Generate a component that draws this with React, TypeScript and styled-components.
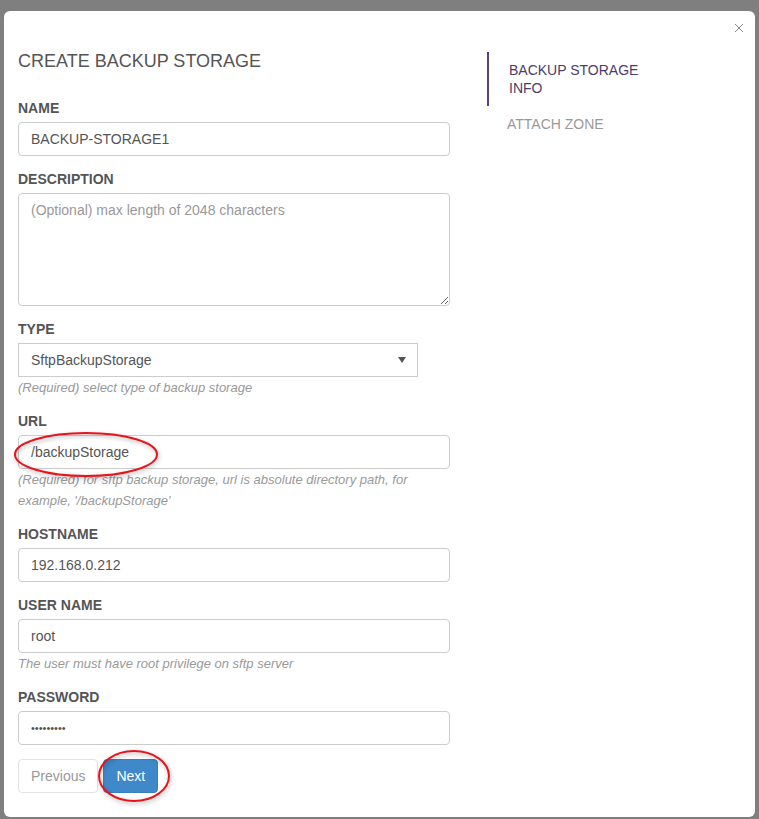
import React from 'react'
import styled, {createGlobalStyle} from 'styled-components'

const GlobalStyle = createGlobalStyle`
	html, body {
		margin: 0;
		padding: 0;
		background: #7f7f7f;
	}
	body {
		font-family: 'Liberation Sans', Arial, sans-serif;
		color: #555;
	}
	* {
		box-sizing: border-box;
	}
`

const Ellipse = ({width, height}: {width: number; height: number}) => (
	<svg width={width} height={height} viewBox={`0 0 ${width} ${height}`}>
		<ellipse cx={width / 2} cy={height / 2} rx={width / 2 - 2} ry={height / 2 - 2} fill="none" stroke="#e8141b" strokeWidth="2" />
	</svg>
)

const App = () => {
	return (
		<>
			<GlobalStyle />
			<Modal>
				<CloseButton aria-label="close">
					<svg width="10" height="10" viewBox="0 0 10 10">
						<path d="M1 1 L9 9 M9 1 L1 9" stroke="#888" strokeWidth="1" />
					</svg>
				</CloseButton>
				<Body>
					<FormColumn>
						<Title>CREATE BACKUP STORAGE</Title>
						<FormGroup>
							<Label>NAME</Label>
							<Input value="BACKUP-STORAGE1" readOnly />
						</FormGroup>
						<FormGroup>
							<Label>DESCRIPTION</Label>
							<TextArea placeholder="(Optional) max length of 2048 characters" readOnly />
						</FormGroup>
						<FormGroup>
							<Label>TYPE</Label>
							<Select>
								<span>SftpBackupStorage</span>
								<svg width="8" height="6" viewBox="0 0 8 6">
									<path d="M0 0 H8 L4 6 Z" fill="#555" />
								</svg>
							</Select>
							<Help>(Required) select type of backup storage</Help>
						</FormGroup>
						<FormGroup>
							<Label>URL</Label>
							<Marked>
								<Input value="/backupStorage" readOnly />
								<Mark $left={-5} $top={-4}>
									<Ellipse width={146} height={47} />
								</Mark>
							</Marked>
							<Help>(Required) for sftp backup storage, url is absolute directory path, for example, '/backupStorage'</Help>
						</FormGroup>
						<FormGroup>
							<Label>HOSTNAME</Label>
							<Input value="192.168.0.212" readOnly />
						</FormGroup>
						<FormGroup>
							<Label>USER NAME</Label>
							<Input value="root" readOnly />
							<Help>The user must have root privilege on sftp server</Help>
						</FormGroup>
						<FormGroup>
							<Label>PASSWORD</Label>
							<Input type="password" value="password1" readOnly $secret />
						</FormGroup>
						<Buttons>
							<Button>Previous</Button>
							<Marked>
								<Button $primary>Next</Button>
								<Mark $left={-6} $top={-10}>
									<Ellipse width={74} height={54} />
								</Mark>
							</Marked>
						</Buttons>
					</FormColumn>
					<Steps>
						<Step $active>BACKUP STORAGE INFO</Step>
						<Step>ATTACH ZONE</Step>
					</Steps>
				</Body>
			</Modal>
		</>
	)
}

const Modal = styled.div`
	position: relative;
	margin: 11px 0 0 4px;
	width: 751px;
	background: #fff;
	border-radius: 6px;
	padding: 40px 14px 24px;
`

const CloseButton = styled.button`
	position: absolute;
	top: 12px;
	right: 11px;
	border: none;
	background: none;
	padding: 0;
	width: 10px;
	height: 10px;
	display: flex;
	cursor: pointer;
`

const Body = styled.div`
	display: flex;
	align-items: flex-start;
`

const FormColumn = styled.div`
	width: 432px;
	display: flex;
	flex-direction: column;
	gap: 13px;
`

const Title = styled.h3`
	margin: 0 0 14px;
	font-size: 18px;
	line-height: 20px;
	font-weight: normal;
	color: #555;
`

const FormGroup = styled.div`
	display: flex;
	flex-direction: column;
`

const Label = styled.label`
	font-size: 14px;
	line-height: 20px;
	font-weight: bold;
	color: #555;
	margin-bottom: 4px;
`

const Input = styled.input<{$secret?: boolean}>`
	width: 100%;
	height: 34px;
	padding: 6px 12px;
	font-family: 'Liberation Sans', Arial, sans-serif;
	font-size: ${(p) => (p.$secret ? '11px' : '14px')};
	color: #555;
	border: 1px solid #ccc;
	border-radius: 4px;
	background: #fff;
	outline: none;
`

const TextArea = styled.textarea`
	width: 100%;
	height: 113px;
	padding: 6px 12px;
	font-family: 'Liberation Sans', Arial, sans-serif;
	font-size: 14px;
	line-height: 20px;
	color: #555;
	border: 1px solid #ccc;
	border-radius: 4px;
	outline: none;
	&::placeholder {
		color: #999;
	}
`

const Select = styled.div`
	width: 400px;
	height: 34px;
	display: flex;
	align-items: center;
	justify-content: space-between;
	padding: 0 11px 0 12px;
	font-size: 14px;
	color: #555;
	border: 1px solid #ccc;
	background: #fff;
`

const Help = styled.p`
	margin: 0;
	font-size: 13px;
	line-height: 21px;
	font-style: italic;
	color: #999;
`

const Marked = styled.div`
	position: relative;
`

const Mark = styled.div<{$left: number; $top: number}>`
	position: absolute;
	left: ${(p) => p.$left}px;
	top: ${(p) => p.$top}px;
	pointer-events: none;
	filter: drop-shadow(1px 2px 2px rgba(0, 0, 0, 0.3));
	svg {
		display: block;
	}
`

const Buttons = styled.div`
	display: flex;
	gap: 5px;
	margin-top: 1px;
`

const Button = styled.button<{$primary?: boolean}>`
	height: 34px;
	padding: 6px 12px;
	font-family: 'Liberation Sans', Arial, sans-serif;
	font-size: 14px;
	border-radius: 4px;
	border: 1px solid ${(p) => (p.$primary ? '#3a7fc0' : '#e3e3e3')};
	background: ${(p) => (p.$primary ? '#3f89ca' : '#fff')};
	color: ${(p) => (p.$primary ? '#fff' : '#999')};
	cursor: pointer;
`

const Steps = styled.ul`
	list-style: none;
	margin: 1px 0 0 37px;
	padding: 0;
	width: 170px;
`

const Step = styled.li<{$active?: boolean}>`
	padding: 9px 0 9px 20px;
	border-left: ${(p) => (p.$active ? '2px solid #5b3f88' : 'none')};
	font-size: 14px;
	line-height: 18px;
	color: ${(p) => (p.$active ? '#4c3d6b' : '#999')};
`

export default App
